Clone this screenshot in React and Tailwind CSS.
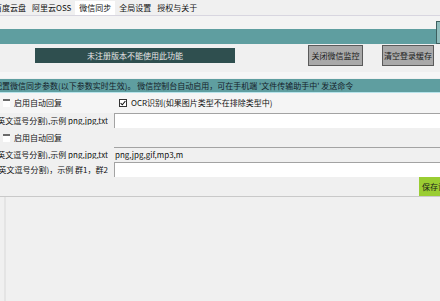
import React from "react";

const tabs = [
  { name: "百度云盘" },
  { name: "阿里云OSS" },
  { name: "微信同步", active: true },
  { name: "全局设置" },
  { name: "授权与关于" },
];

function Check({ checked }) {
  if (!checked) {
    return <span className="block w-[7px] h-[8px] border-t-2 border-[#6b6b6b] bg-white" />;
  }
  return (
    <span className="flex items-center justify-center w-[8px] h-[8px] border border-[#333] bg-white">
      <svg width="6" height="6" viewBox="0 0 6 6">
        <path d="M0.6 3.1 L2.3 4.8 L5.4 1" fill="none" stroke="#111" strokeWidth="1.1" />
      </svg>
    </span>
  );
}

function Label({ children }) {
  return (
    <div className="w-[108px] shrink-0 flex justify-end overflow-hidden whitespace-nowrap">
      <span>{children}</span>
    </div>
  );
}

export default function App() {
  return (
    <div className="w-[440px] h-[301px] overflow-hidden bg-[#f0f0f0] text-[8px] leading-none text-[#111] font-['Noto_Sans_CJK_SC','Noto_Sans',sans-serif]">
      {/* tab strip */}
      <div className="h-[16px] flex items-end border-b border-[#d8d6e0] overflow-hidden">
        <div className="flex items-end -ml-[9px] whitespace-nowrap">
          {tabs.map((t) => (
            <div
              key={t.name}
              className={
                t.active
                  ? "h-[14px] px-[4px] mx-[1px] flex items-center bg-white"
                  : "h-[14px] px-[3px] flex items-center"
              }
            >
              {t.name}
            </div>
          ))}
        </div>
      </div>

      <div className="h-[13px] bg-[#f3f3f3]" />

      {/* top teal bar */}
      <div className="h-[15px] flex items-end">
        <div className="flex-1 h-[15px] bg-[#5f9ea0]" />
        <div className="w-[4px] h-[23px] shrink-0 self-end bg-[#8fbcbc] border border-r-0 border-[#3d5f5f]" />
      </div>

      {/* action row */}
      <div className="h-[23px] flex items-center">
        <div className="ml-[35px] w-[200px] h-[15px] flex items-center justify-center bg-[#2f4f4f] text-[#e6e6e6]">
          未注册版本不能使用此功能
        </div>
        <button className="ml-[73px] w-[55px] h-[21px] flex items-center justify-center bg-[#a9a9a9] border border-[#5a5a5a] text-[#1a1a1a]">
          关闭微信监控
        </button>
        <button className="ml-[19px] w-[52px] h-[21px] flex items-center justify-center bg-[#a9a9a9] border border-[#5a5a5a] text-[#1a1a1a]">
          清空登录缓存
        </button>
      </div>

      <div className="h-[12px] flex flex-col">
        <div className="h-[5px]" />
        <div className="h-[6px] bg-[#f6f6f6]" />
      </div>

      {/* info bar */}
      <div className="h-[14px] flex items-center bg-[#5f9ea0] border-b border-[#b6e3ea] overflow-hidden whitespace-nowrap text-[#14212a]">
        <div className="-ml-[6px]">
          配置微信同步参数(以下参数实时生效)。 微信控制台自动启用，可在手机端 '文件传输助手中' 发送命令
        </div>
      </div>

      {/* row: checkboxes */}
      <div className="h-[20px] flex items-center bg-[#f5f5f5]">
        <div className="ml-[3px]">
          <Check />
        </div>
        <span className="ml-[4px]">启用自动回复</span>
        <div className="ml-[57px]">
          <Check checked />
        </div>
        <span className="ml-[4px]">OCR识别(如果图片类型不在排除类型中)</span>
      </div>

      {/* row: exclude types */}
      <div className="h-[15px] flex items-center">
        <Label>后缀(英文逗号分割),示例 png,jpg,txt</Label>
        <div className="ml-[6px] flex-1 h-[15px] bg-white border-t border-l border-[#a3a3a3]" />
      </div>

      {/* row: auto reply */}
      <div className="h-[19px] flex items-center">
        <div className="ml-[3px]">
          <Check />
        </div>
        <span className="ml-[4px]">启用自动回复</span>
      </div>

      {/* row: file types */}
      <div className="h-[15px] flex items-center">
        <Label>后缀(英文逗号分割),示例 png,jpg,txt</Label>
        <div className="ml-[6px] flex-1 h-[15px] flex items-center pl-[1px] border-t border-[#a3a3a3]">
          png,jpg,gif,mp3,m
        </div>
      </div>

      {/* row: groups */}
      <div className="h-[15px] flex items-center">
        <Label>群名(英文逗号分割)，示例 群1，群2</Label>
        <div className="ml-[6px] flex-1 h-[15px] bg-white border-t border-l border-[#a3a3a3]" />
      </div>

      {/* save row */}
      <div className="h-[20px] flex justify-end items-stretch border-b border-[#c9c9c9] overflow-hidden">
        <div className="w-[21px] overflow-hidden">
          <button className="w-[40px] h-[19px] flex items-center pl-[3px] whitespace-nowrap bg-[#9acd32] text-[#1a1a1a]">
            保存设置
          </button>
        </div>
      </div>

      {/* empty bottom */}
      <div className="h-[110px] ml-[4px] border-l-2 border-[#e4e4e4] bg-[#f0f0f0]" />
    </div>
  );
}
